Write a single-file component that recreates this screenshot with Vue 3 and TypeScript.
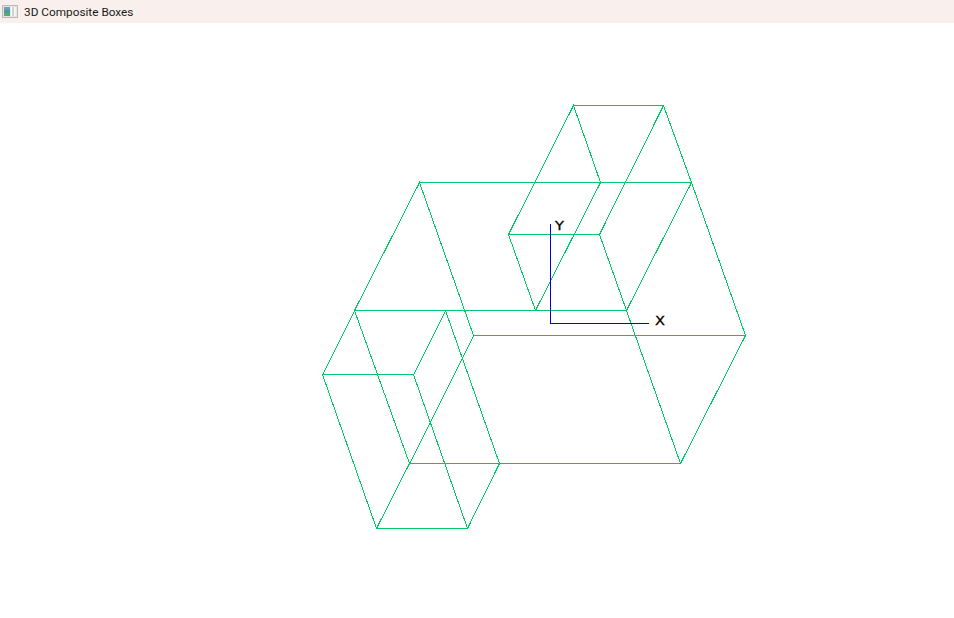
<script setup lang="ts">
const wires: string[] = [
  // upper box
  'M573.5 105.5H663.5L691.5 182.5H600.5L573.5 105.5L508.5 234.5H599.5L626.5 310.5H535.5L508.5 234.5',
  'M663.5 105.5L599.5 234.5M600.5 182.5L535.5 310.5M691.5 182.5L626.5 310.5',
  // big box
  'M419.5 182.5H691.5L745.5 335.5H473.5L419.5 182.5L354.5 310.5H626.5L680.5 463.5H409.5L354.5 310.5',
  'M745.5 335.5L680.5 463.5M473.75 335.5L409.75 463.5',
  // lower box
  'M445.5 310.5L499.5 463.5M445.75 310.5L413.75 374.5M413.5 374.5H322.5M354.75 310.5L322.75 374.5',
  'M322.5 374.5L376.5 528.5H467.5L413.5 374.5M467.5 528.5L499.5 463.5M409.5 463.5L376.5 528.5',
]
</script>

<template>
  <div class="window">
    <header class="titlebar">
      <svg class="app-icon" width="16" height="16" viewBox="0 0 16 16">
        <rect x="0.5" y="1.5" width="15" height="12" fill="#e8e6e5" stroke="#bdb9b8" />
        <rect x="2" y="3" width="6" height="9" fill="#4f9a94" />
        <rect x="2" y="3" width="6" height="3" fill="#6f9fc0" />
        <rect x="2" y="9" width="6" height="3" fill="#58a878" />
        <rect x="9" y="3" width="1" height="9" fill="#ffffff" />
        <rect x="10" y="3" width="2" height="9" fill="#c9d8d2" />
        <rect x="12" y="3" width="2" height="9" fill="#f4f4f2" />
      </svg>
      <span class="title">3D Composite Boxes</span>
    </header>
    <svg class="canvas" width="954" height="595" viewBox="0 23 954 595">
      <g fill="none" stroke="#00c864" stroke-width="1" shape-rendering="crispEdges">
        <path v-for="(d, i) in wires" :key="i" :d="d" />
      </g>
      <path d="M550.5 224V323.5H649" fill="none" stroke="#0000e0" stroke-width="1" shape-rendering="crispEdges" />
      <text x="555" y="230.5" class="axis">Y</text>
      <text x="655" y="325.5" class="axis">X</text>
    </svg>
  </div>
</template>

<style scoped>
.window {
  display: flex;
  flex-direction: column;
  width: 954px;
  height: 618px;
  overflow: hidden;
  background: #ffffff;
}
.titlebar {
  display: flex;
  align-items: center;
  gap: 6px;
  height: 23px;
  flex: none;
  padding-left: 2px;
  background: #f9f0ed;
}
.app-icon {
  flex: none;
}
.title {
  font-family: Roboto, "Open Sans", sans-serif;
  font-size: 11.8px;
  color: #1a1a1a;
}
.canvas {
  display: block;
  flex: none;
}
.axis {
  font-family: "DejaVu Sans", sans-serif;
  font-size: 13px;
  fill: #000000;
  stroke: #000000;
  stroke-width: 0.3px;
  transform-box: fill-box;
  transform-origin: left center;
  transform: scaleX(1.12);
}
</style>
